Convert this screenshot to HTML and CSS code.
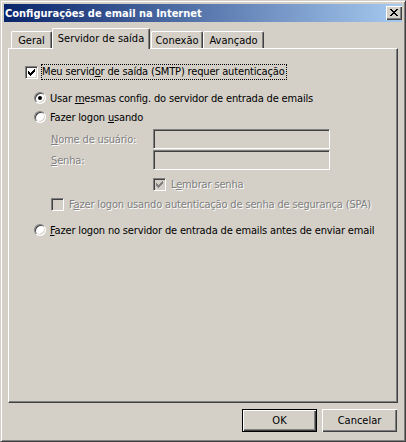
FILE: index.html
```html
<!DOCTYPE html>
<html lang="pt">
<head>
<meta charset="utf-8">
<title>Configurações de email na Internet</title>
<link rel="stylesheet" href="styles.css">
</head>
<body>
<div class="window">
  <div class="titlebar">
    <span class="title">Configurações de email na Internet</span>
    <span class="close-btn">
      <svg width="8" height="7" viewBox="0 0 8 7" shape-rendering="crispEdges"><path fill="#000" d="M0 0h2v1h-2z M6 0h2v1h-2z M1 1h2v1h-2z M5 1h2v1h-2z M2 2h4v1h-4z M3 3h2v1h-2z M2 4h4v1h-4z M1 5h2v1h-2z M5 5h2v1h-2z M0 6h2v1h-2z M6 6h2v1h-2z"/></svg>
    </span>
  </div>
  <div class="body">
    <div class="tabs">
      <div class="tab t-geral">Geral</div>
      <div class="tab sel t-serv">Servidor de saída</div>
      <div class="tab t-con">Conexão</div>
      <div class="tab t-av">Avançado</div>
    </div>
    <div class="panel">
      <div class="row r-auth">
        <span class="cb"><svg width="7" height="7" viewBox="0 0 7 7" shape-rendering="crispEdges"><path fill="#000" d="M6 0h1v1h-1z M5 1h2v1h-2z M0 2h1v1h-1z M4 2h3v1h-3z M0 3h2v1h-2z M3 3h3v1h-3z M0 4h5v1h-5z M1 5h3v1h-3z M2 6h1v1h-1z"/></svg></span>
        <span class="focus">Meu servid<u>o</u>r de saída (SMTP) requer autenticação</span>
      </div>
      <div class="row r-same">
        <span class="radio on"></span>
        <span class="rlabel">Usar <u>m</u>esmas config. do servidor de entrada de emails</span>
      </div>
      <div class="row r-logon">
        <span class="radio"></span>
        <span class="rlabel">Fazer logon <u>u</u>sando</span>
      </div>
      <div class="field r-user">
        <span class="flabel dis"><u>N</u>ome de usuário:</span>
        <span class="input"></span>
      </div>
      <div class="field r-pass">
        <span class="flabel dis"><u>S</u>enha:</span>
        <span class="input"></span>
      </div>
      <div class="row r-remember">
        <span class="cb off"><svg width="7" height="7" viewBox="0 0 7 7" shape-rendering="crispEdges"><path fill="#808080" d="M6 0h1v1h-1z M5 1h2v1h-2z M0 2h1v1h-1z M4 2h3v1h-3z M0 3h2v1h-2z M3 3h3v1h-3z M0 4h5v1h-5z M1 5h3v1h-3z M2 6h1v1h-1z"/></svg></span>
        <span class="clabel dis">L<u>e</u>mbrar senha</span>
      </div>
      <div class="row r-spa">
        <span class="cb off"></span>
        <span class="clabel dis">F<u>a</u>zer logon usando autenticação de senha de segurança (SPA)</span>
      </div>
      <div class="row r-before">
        <span class="radio"></span>
        <span class="rlabel"><u>F</u>azer logon no servidor de entrada de emails antes de enviar email</span>
      </div>
    </div>
    <div class="buttons">
      <button class="btn default">OK</button>
      <button class="btn">Cancelar</button>
    </div>
  </div>
</div>
</body>
</html>
```
FILE: styles.css
```css
* { box-sizing: border-box; }

html, body {
  margin: 0;
  padding: 0;
  background: #d4d0c8;
}

body {
  font-family: "DejaVu Sans Condensed", "DejaVu Sans", sans-serif;
  font-stretch: condensed;
  font-size: 11px;
  color: #000;
}

.window {
  width: 406px;
  height: 442px;
  background: #d4d0c8;
  border: 1px solid;
  border-color: #d4d0c8 #404040 #404040 #d4d0c8;
  box-shadow: inset 1px 1px 0 #fff, inset -1px -1px 0 #808080;
  padding: 3px;
  display: flex;
  flex-direction: column;
}

.titlebar {
  height: 18px;
  background: linear-gradient(to right, #0a246a, #a6caf0);
  display: flex;
  align-items: center;
  justify-content: space-between;
  padding: 0 0 0 1px;
}

.title {
  color: #fff;
  font-weight: bold;
  font-size: 11px;
  line-height: 13px;
}

.close-btn {
  width: 16px;
  height: 14px;
  background: #d4d0c8;
  box-shadow: inset 1px 1px 0 #fff, inset -1px -1px 0 #404040, inset -2px -2px 0 #808080;
  display: flex;
  align-items: center;
  justify-content: center;
  padding: 0 0 1px 0;
}

.close-btn svg { display: block; }

.body {
  flex: 1;
  display: flex;
  flex-direction: column;
  padding: 6px 4px 6px 4px;
}

.tabs {
  height: 20px;
  display: flex;
  align-items: flex-end;
}

.tab {
  height: 17px;
  background: #d4d0c8;
  border-left: 1px solid #fff;
  border-top: 1px solid #fff;
  border-right: 1px solid #404040;
  border-top-left-radius: 2px;
  border-top-right-radius: 2px;
  box-shadow: inset -1px 0 0 #808080;
  text-align: center;
  line-height: 13px;
  padding-top: 2px;
  white-space: nowrap;
}

.tab.sel {
  height: 21px;
  margin-bottom: -1px;
  position: relative;
  z-index: 1;
  padding-top: 3px;
}

.t-geral { margin-left: 3px; width: 41px; }
.t-serv { width: 98px; }
.t-con { margin-left: 1px; width: 52px; }
.t-av { width: 61px; }

.panel {
  height: 355px;
  border-left: 1px solid #fff;
  border-top: 1px solid #fff;
  border-right: 1px solid #404040;
  border-bottom: 1px solid #404040;
  box-shadow: inset -1px -1px 0 #808080;
  display: flex;
  flex-direction: column;
  letter-spacing: -0.16px;
}

.row {
  height: 16px;
  display: flex;
  align-items: center;
  white-space: nowrap;
}

.field {
  height: 20px;
  display: flex;
  align-items: center;
  padding-left: 42px;
}

.r-auth { margin-top: 15px; padding-left: 16px; }
.r-same { margin-top: 10px; padding-left: 25px; }
.r-logon { margin-top: 3px; padding-left: 25px; }
.r-user { margin-top: 4px; }
.r-pass { margin-top: 1px; }
.r-remember { margin-top: 6px; padding-left: 144px; }
.r-spa { margin-top: 4px; padding-left: 42px; }
.r-before { margin-top: 10px; padding-left: 25px; }

.cb {
  width: 13px;
  height: 13px;
  flex: none;
  background: #fff;
  border: 1px solid;
  border-color: #808080 #fff #fff #808080;
  box-shadow: inset 1px 1px 0 #404040, inset -1px -1px 0 #d4d0c8;
  padding: 2px;
}

.cb svg { display: block; }

.cb.off { background: #d4d0c8; }

.focus {
  margin-left: 3px;
  height: 16px;
  line-height: 14px;
  border: 1px dotted #000;
  padding: 0 1px 0 0;
}

.radio {
  width: 12px;
  height: 12px;
  flex: none;
  border-radius: 50%;
  background: #fff;
  border: 1px solid;
  border-color: #808080 #fff #fff #808080;
  box-shadow: inset 1px 1px 0 #404040, inset -1px -1px 0 #d4d0c8;
  display: flex;
  align-items: center;
  justify-content: center;
}

.radio.on::after {
  content: "";
  width: 4px;
  height: 4px;
  border-radius: 50%;
  background: #000;
}

.rlabel { margin-left: 4px; line-height: 13px; }
.clabel { margin-left: 5px; line-height: 13px; }

.flabel {
  width: 102px;
  line-height: 13px;
}

.dis {
  color: #808080;
  text-shadow: 1px 1px 0 #fff;
}

.input {
  width: 177px;
  height: 20px;
  background: #d4d0c8;
  border: 1px solid;
  border-color: #808080 #fff #fff #808080;
  box-shadow: inset 1px 1px 0 #404040, inset -1px -1px 0 #d4d0c8;
}

.buttons {
  display: flex;
  justify-content: flex-end;
  gap: 5px;
  margin-top: 6px;
  padding-right: 1px;
}

.btn {
  width: 75px;
  height: 23px;
  font: inherit;
  color: #000;
  background: #d4d0c8;
  border: none;
  box-shadow: inset 1px 1px 0 #fff, inset -1px -1px 0 #404040, inset -2px -2px 0 #808080;
  padding: 0;
  margin: 0;
}

.btn.default {
  border: 1px solid #000;
}
```
